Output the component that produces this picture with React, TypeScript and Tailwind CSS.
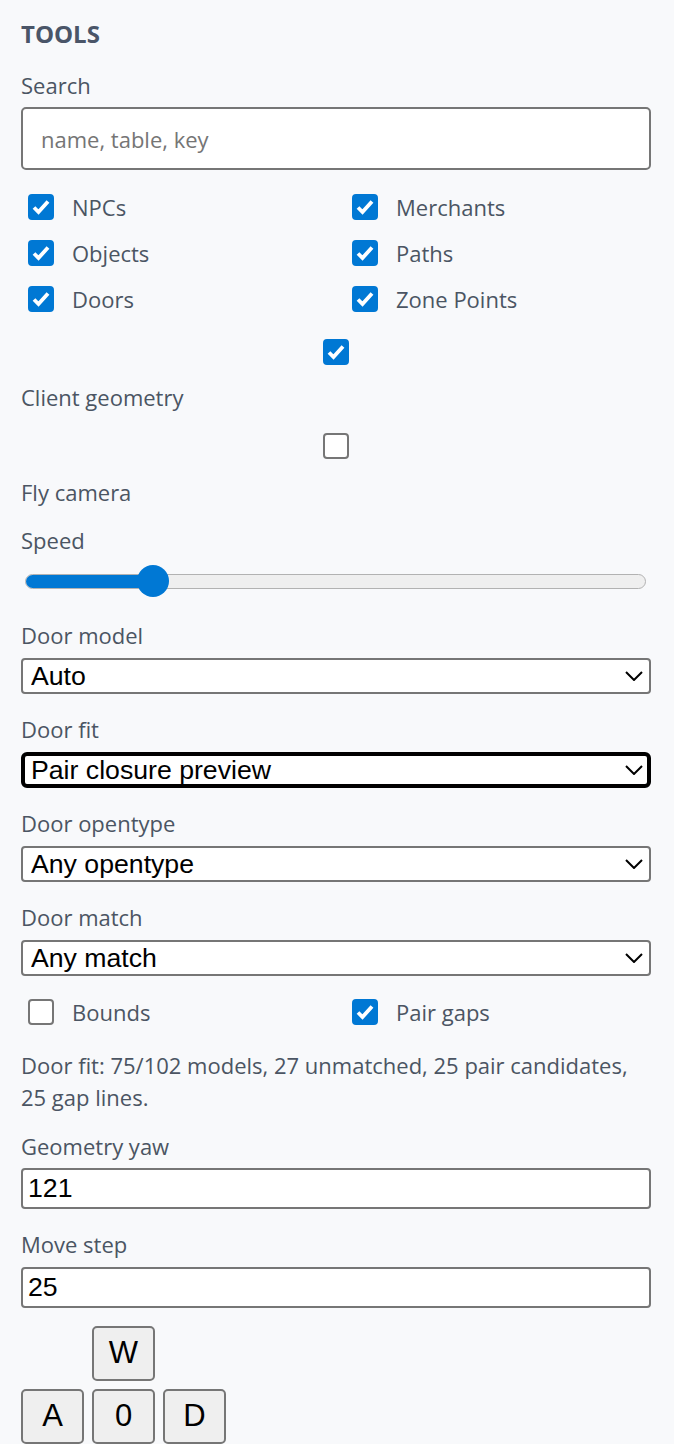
import * as Slider from "@radix-ui/react-slider";

const label = "block text-[22px] leading-[32px] text-[#4b5563]";
const selectBase =
  "w-full h-[36px] appearance-none bg-white pr-[40px] text-[26.67px] leading-[28px] text-black font-['Liberation_Sans',Arial,sans-serif] outline-none";
const selectNormal = selectBase + " rounded-[4px] border-2 border-[#767676] pl-[8px]";
const selectFocused = selectBase + " rounded-[6px] border-4 border-black pl-[6px]";
const inputCls =
  "w-full h-[41px] bg-white rounded-[4px] border-2 border-[#767676] px-[5px] text-[26.67px] text-black font-['Liberation_Sans',Arial,sans-serif] outline-none";
const keyCls =
  "w-[63px] h-[55px] bg-[#efefef] rounded-[5px] border-2 border-[#767676] text-[31px] text-black font-['Liberation_Sans',Arial,sans-serif]";

function Check({ checked }: { checked?: boolean }) {
  return (
    <span className="relative inline-flex w-[26px] h-[26px] shrink-0">
      <input
        type="checkbox"
        defaultChecked={checked}
        className="peer appearance-none m-0 w-[26px] h-[26px] rounded-[4px] border-2 border-[#767676] bg-white checked:bg-[#0078d4] checked:border-[#0078d4]"
      />
      <svg
        viewBox="0 0 26 26"
        className="absolute inset-0 w-[26px] h-[26px] pointer-events-none hidden peer-checked:block"
      >
        <path d="M6 13.5 L10.5 18 L20 7.5" fill="none" stroke="white" strokeWidth="3.8" strokeLinejoin="miter" />
      </svg>
    </span>
  );
}

function CheckItem({ text, checked }: { text: string; checked?: boolean }) {
  return (
    <label className="flex items-center h-[46px] text-[22px] text-[#4b5563]">
      <span className="ml-[7px] mr-[18px] flex">
        <Check checked={checked} />
      </span>
      {text}
    </label>
  );
}

function Chevron() {
  return (
    <svg
      viewBox="0 0 18 10"
      className="absolute right-[8px] top-1/2 -translate-y-1/2 w-[18px] h-[10px] pointer-events-none"
    >
      <polyline points="1,1 9,9 17,1" fill="none" stroke="black" strokeWidth="2" />
    </svg>
  );
}

function SelectField({
  title,
  options,
  focused,
  first,
}: {
  title: string;
  options: string[];
  focused?: boolean;
  first?: boolean;
}) {
  return (
    <div className={first ? "mt-[22px]" : "mt-[19px]"}>
      <span className={label}>{title}</span>
      <div className="relative mt-[7px]">
        <select defaultValue={options[0]} className={focused ? selectFocused : selectNormal}>
          {options.map((o) => (
            <option key={o}>{o}</option>
          ))}
        </select>
        <Chevron />
      </div>
    </div>
  );
}

export default function App() {
  return (
    <div className="min-h-[1444px] bg-[#f8f9fb] pl-[21px] pr-[23px] pt-[18px] font-['Open_Sans','Noto_Sans',sans-serif]">
      <h2 className="text-[24px] leading-[32px] font-bold text-[#4a5568]">TOOLS</h2>

      <span className={label + " mt-[19px]"}>Search</span>
      <input
        type="text"
        placeholder="name, table, key"
        className="mt-[6px] w-full h-[63px] bg-white rounded-[5px] border-2 border-[#767676] px-[18px] text-[22px] text-black placeholder:text-[#757575] outline-none"
      />

      <div className="mt-[14px] grid grid-cols-2 gap-x-[18px]">
        <CheckItem text="NPCs" checked />
        <CheckItem text="Merchants" checked />
        <CheckItem text="Objects" checked />
        <CheckItem text="Paths" checked />
        <CheckItem text="Doors" checked />
        <CheckItem text="Zone Points" checked />
      </div>

      <label className="block">
        <span className="flex justify-center mt-[17px]">
          <Check checked />
        </span>
        <span className={label + " mt-[16px]"}>Client geometry</span>
      </label>

      <label className="block">
        <span className="flex justify-center mt-[20px]">
          <Check />
        </span>
        <span className={label + " mt-[17px]"}>Fly camera</span>
      </label>

      <span className={label + " mt-[16px]"}>Speed</span>
      <Slider.Root
        defaultValue={[19]}
        max={100}
        step={1}
        className="relative mt-[9px] ml-[4px] w-[621px] h-[32px] flex items-center select-none touch-none"
      >
        <Slider.Track className="relative grow h-[15px] rounded-full bg-[#efefef] border border-[#b2b2b2] overflow-hidden">
          <Slider.Range className="absolute h-full bg-[#0078d4]" />
        </Slider.Track>
        <Slider.Thumb className="block w-[32px] h-[32px] rounded-full bg-[#0078d4] outline-none" />
      </Slider.Root>

      <SelectField title="Door model" options={["Auto"]} first />
      <SelectField title="Door fit" options={["Pair closure preview"]} focused />
      <SelectField title="Door opentype" options={["Any opentype"]} />
      <SelectField title="Door match" options={["Any match"]} />

      <div className="mt-[13px] grid grid-cols-2 gap-x-[18px]">
        <CheckItem text="Bounds" />
        <CheckItem text="Pair gaps" checked />
      </div>

      <p className="mt-[14px] text-[22px] leading-[32px] text-[#4b5563]">
        Door fit: 75/102 models, 27 unmatched, 25 pair candidates, 25 gap lines.
      </p>

      <span className={label + " mt-[17px]"}>Geometry yaw</span>
      <input type="text" defaultValue="121" className={inputCls + " mt-[6px]"} />

      <span className={label + " mt-[19px]"}>Move step</span>
      <input type="text" defaultValue="25" className={inputCls + " mt-[7px]"} />

      <div className="mt-[18px] grid grid-cols-[63px_63px_63px] gap-x-[8px] gap-y-[8px]">
        <span />
        <button className={keyCls}>W</button>
        <span />
        <button className={keyCls}>A</button>
        <button className={keyCls}>0</button>
        <button className={keyCls}>D</button>
      </div>
    </div>
  );
}
